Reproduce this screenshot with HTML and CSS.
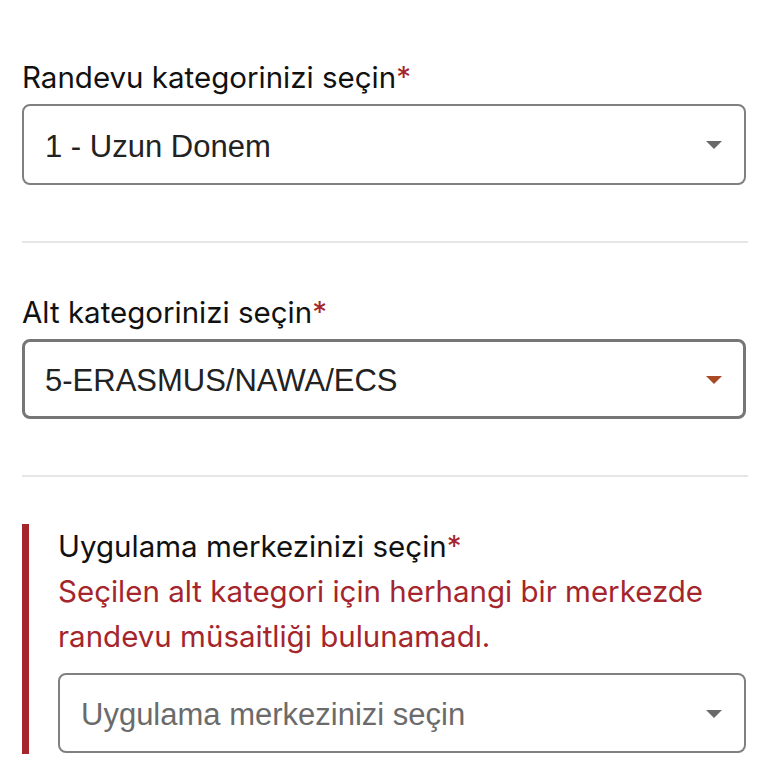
FILE: index.html
```html
<!DOCTYPE html>
<html lang="tr">
<head>
<meta charset="utf-8">
<link rel="stylesheet" href="styles.css">
</head>
<body>
<div class="form">
  <div class="field">
    <label class="label">Randevu kategorinizi seçin<span class="req">*</span></label>
    <div class="select">
      <span class="value">1 - Uzun Donem</span>
      <span class="arrow"></span>
    </div>
  </div>
  <hr class="divider">
  <div class="field">
    <label class="label">Alt kategorinizi seçin<span class="req">*</span></label>
    <div class="select focused">
      <span class="value">5-ERASMUS/NAWA/ECS</span>
      <span class="arrow"></span>
    </div>
  </div>
  <hr class="divider">
  <div class="field error">
    <label class="label">Uygulama merkezinizi seçin<span class="req">*</span></label>
    <p class="error-msg">Seçilen alt kategori için herhangi bir merkezde randevu müsaitliği bulunamadı.</p>
    <div class="select last">
      <span class="value placeholder">Uygulama merkezinizi seçin</span>
      <span class="arrow"></span>
    </div>
  </div>
</div>
</body>
</html>
```

FILE: styles.css
```css
html, body {
  margin: 0;
  padding: 0;
  background: #ffffff;
}
body {
  padding: 55px 22px 0 22px;
  font-family: Inter, "Noto Sans", sans-serif;
  color: #111111;
}
.form {
  display: flex;
  flex-direction: column;
}
.field {
  display: flex;
  flex-direction: column;
}
.label {
  font-size: 29.5px;
  line-height: 45px;
  color: #111111;
  margin-bottom: 4px;
}
.req {
  color: #a4262c;
}
.select {
  box-sizing: border-box;
  height: 81px;
  border: 2px solid #808080;
  border-radius: 8px;
  display: flex;
  align-items: center;
  justify-content: space-between;
  padding: 0 22px 0 21px;
  background: #fff;
}
.select.focused {
  border: 3px solid #767676;
  height: 80px;
  padding-left: 20px;
  padding-right: 21px;
}
.select.last {
  height: 80px;
}
.value {
  font-family: "Liberation Sans", Arial, sans-serif;
  font-size: 31px;
  color: #222222;
  padding-top: 4px;
}
.value.placeholder {
  color: #6b6b6b;
}
.arrow {
  width: 0;
  height: 0;
  border-left: 8.5px solid transparent;
  border-right: 8.5px solid transparent;
  border-top: 8.5px solid #6a6a6a;
  margin-top: 1px;
}
.focused .arrow {
  border-top-color: #a84a25;
}
.divider {
  border: none;
  height: 2px;
  background: #e6e6e6;
  margin: 56px 0 47px 0;
  width: 726px;
}
.field.error {
  border-left: 7px solid #a4262c;
  padding-left: 29px;
  padding-bottom: 1px;
}
.field.error .label {
  margin-bottom: 0;
}
.error-msg {
  margin: 0 0 14px 0;
  font-size: 29.5px;
  line-height: 45px;
  color: #a4262c;
}
```
